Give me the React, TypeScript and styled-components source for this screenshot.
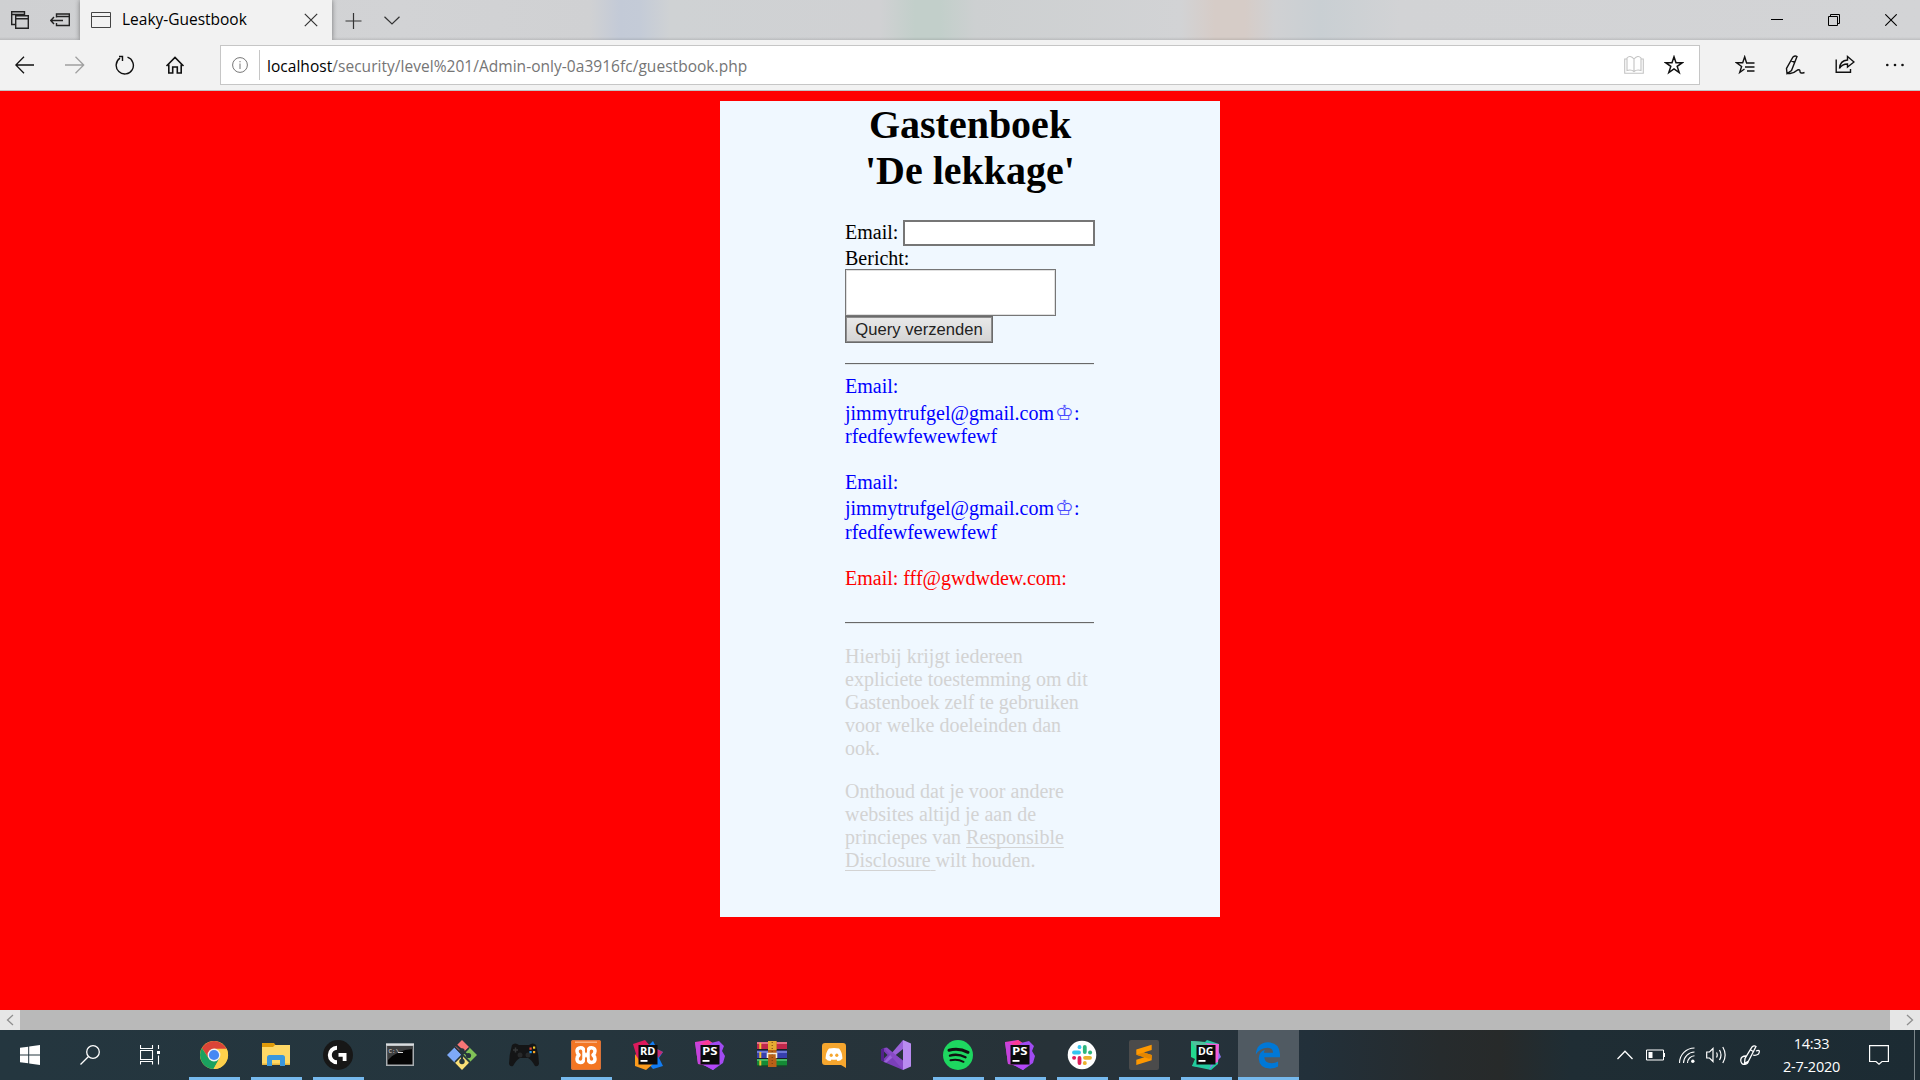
import React from "react";
import styled, { createGlobalStyle, css } from "styled-components";

const GlobalStyle = createGlobalStyle`
  html, body { margin: 0; padding: 0; overflow: hidden; }
  * { box-sizing: border-box; }
`;

const uiFont = `"Open Sans", "Noto Sans", sans-serif`;
const serif = `"Liberation Serif", "Times New Roman", serif`;

const Screen = styled.div`
  width: 1920px;
  height: 1080px;
  display: flex;
  flex-direction: column;
  overflow: hidden;
  background: #f00;
`;

const TitleBar = styled.header`
  flex: none;
  height: 40px;
  display: flex;
  background: linear-gradient(to bottom, transparent 37px, rgba(0, 0, 0, 0.1) 40px),
    linear-gradient(
      to right,
      #cfd0d2 0, #d2d3d5 400px, #d0d1d3 590px, #c3cad7 620px, #c4cbd7 640px, #cfd2d4 670px,
      #d0d1d3 880px, #c2cfca 915px, #c2cfca 940px, #cdd0d1 975px, #d2d3d5 1180px,
      #d6ccc7 1215px, #d6ccc7 1245px, #d0d1d3 1275px, #c9cfd3 1320px, #d2d3d5 1400px, #d3d4d6 1920px
    );
`;

const Cell = styled.span<{ $w: number }>`
  flex: none;
  width: ${(p) => p.$w}px;
  height: 100%;
  display: flex;
  align-items: center;
  justify-content: center;
`;

const CaptionButton = styled.span`
  flex: none;
  width: 57px;
  height: 100%;
  padding-right: 1px;
  display: flex;
  align-items: center;
  justify-content: center;
`;

const Tab = styled.div`
  flex: none;
  width: 252px;
  display: flex;
  align-items: center;
  background: #f2f2f2;
  box-shadow: 0 0 5px rgba(0, 0, 0, 0.45);
  clip-path: inset(0 -6px 0 -6px);
`;

const TabTitle = styled.span`
  flex: 1;
  padding-bottom: 2px;
  font: 15.5px/20px ${uiFont};
  letter-spacing: -0.01px;
  color: #000;
  white-space: nowrap;
`;

const Spacer = styled.div`
  flex: 1;
`;

const Toolbar = styled.nav`
  flex: none;
  height: 51px;
  display: flex;
  align-items: center;
  background: #f2f2f2;
  border-bottom: 1px solid #c2c2c2;
`;

const AddressBar = styled.div`
  width: 1480px;
  height: 40px;
  margin: 0 20px;
  padding-right: 5px;
  display: flex;
  align-items: center;
  background: #fff;
  border: 1px solid #c6c6c6;
`;

const Divider = styled.span`
  width: 1px;
  height: 30px;
  background: #c6c6c6;
`;

const Url = styled.span`
  flex: 1;
  padding: 2px 0 0 7px;
  font: 15.5px/22px ${uiFont};
  letter-spacing: 0.035px;
  color: #757575;
  white-space: nowrap;
`;

const Host = styled.span`
  color: #000;
`;

const Viewport = styled.main`
  flex: 1;
  min-height: 0;
  padding: 10px 0 0 720px;
  background: #f00;
`;

const Card = styled.div`
  width: 500px;
  height: 816px;
  padding: 1px 125px 0;
  background: #f0f8ff;
  font: 20px/23px ${serif};
`;

const Heading = styled.h1`
  margin: 0 0 26px;
  font: bold 40px/46px ${serif};
  text-align: center;
  color: #000;
`;

const Form = styled.form`
  display: flex;
  flex-direction: column;
  align-items: flex-start;
`;

const FieldLine = styled.label`
  width: 250px;
  height: 26px;
  display: flex;
  align-items: flex-start;
  justify-content: space-between;
  white-space: nowrap;
`;

const FieldText = styled.span`
  padding-top: 1px;
`;

const FieldLabel = styled.label`
  height: 23px;
  padding-top: 1px;
`;

const EmailInput = styled.input`
  width: 192px;
  height: 26px;
  padding: 0 4px;
  border: 2px solid #767676;
  outline: none;
  background: #fff;
  font: 16px "Liberation Sans", Arial, sans-serif;
`;

const MessageInput = styled.textarea`
  display: block;
  width: 211px;
  height: 47px;
  border: 1px solid #767676;
  box-shadow: inset 0 0 0 1px #e0e0e0;
  background: #fff;
  resize: none;
  outline: none;
`;

const SubmitButton = styled.button`
  width: 148px;
  height: 27px;
  padding: 0;
  border: 1px solid #6b6b6b;
  box-shadow: inset 0 0 0 1px #8d8d8d;
  background: linear-gradient(#e9e9e9, #d4d4d4);
  font: 16.6px/23px "Liberation Sans", Arial, sans-serif;
  color: #222;
  white-space: nowrap;
`;

const Rule = styled.hr<{ $top: number; $bottom: number }>`
  width: 249px;
  height: 2px;
  margin: ${(p) => p.$top}px 0 ${(p) => p.$bottom}px;
  border: 0;
  border-top: 1px solid #696969;
  border-bottom: 1px solid #dfe6ea;
`;

const Entry = styled.p<{ $color: string }>`
  margin: 0 0 23px;
  color: ${(p) => p.$color};
  white-space: nowrap;
`;

const Line = styled.span<{ $lead?: number; $trail?: number }>`
  display: flex;
  height: ${(p) => 23 + (p.$lead ?? 0) + (p.$trail ?? 0)}px;
  padding-top: ${(p) => p.$lead ?? 0}px;
`;

const Crown = styled.span`
  width: 20px;
  padding-left: 1px;
  font: 21px/22px "DejaVu Sans", sans-serif;
  color: #4a4cff;
`;

const Notice = styled.p`
  margin: 0 0 20px;
  color: #d3d3d3;
  white-space: nowrap;
`;

const NoticeLink = styled.a`
  color: #d3d3d3;
  text-decoration: underline;
  text-decoration-thickness: 1px;
  text-underline-offset: 3px;
  text-decoration-skip-ink: none;
`;

const ScrollBar = styled.div`
  flex: none;
  height: 20px;
  display: flex;
  background: #b9b9b9;
`;

const ScrollEnd = styled.span<{ $w: number; $right?: boolean }>`
  width: ${(p) => p.$w}px;
  display: flex;
  align-items: center;
  justify-content: ${(p) => (p.$right ? "flex-end" : "center")};
  padding-right: ${(p) => (p.$right ? 6 : 0)}px;
  background: #e6e6e6;
`;

const TaskBar = styled.footer`
  flex: none;
  height: 50px;
  display: flex;
  background: linear-gradient(to right, #24363f 0, #25353d 600px, #273238 1050px, #26323a 1200px, #22303a 1310px, #262b2d 1440px, #272a2a 1500px, #1f2d34 1570px, #1c2b33 1920px);
`;

const Apps = styled.div`
  display: flex;
  margin-left: 3px;
`;

const AppButton = styled.div<{ $running?: boolean; $active?: boolean }>`
  width: 62px;
  height: 50px;
  padding: 0 5px 0 6px;
  display: flex;
  flex-direction: column;
  ${(p) =>
    p.$active &&
    css`
      width: 61px;
      margin-left: 1px;
      padding: 0;
      background: #505a62;
    `}
  &::after {
    content: "";
    height: 3px;
    background: ${(p) => (p.$running ? "#76b9ed" : "transparent")};
  }
`;

const AppIcon = styled.span`
  height: 47px;
  padding: 10px 1px 0 0;
  display: flex;
  justify-content: center;
  align-items: flex-start;
`;

const Tray = styled.div`
  display: flex;
  align-items: center;
`;

const Clock = styled.div`
  width: 85px;
  height: 50px;
  padding-top: 2px;
  text-align: center;
  font: 14.5px/23px ${uiFont};
  letter-spacing: -0.25px;
  color: #fff;
  white-space: nowrap;
`;

const ShowDesktop = styled.span`
  width: 6px;
  height: 50px;
  border-left: 1px solid #7b868b;
`;

type GlyphProps = { w: number; h?: number; color?: string; sw?: number; children: React.ReactNode };
const Glyph = ({ w, h = w, color = "#111", sw = 1.3, children }: GlyphProps) => (
  <svg width={w} height={h} viewBox={`0 0 ${w} ${h}`} fill="none" stroke={color} strokeWidth={sw}>
    {children}
  </svg>
);

const Art = ({ children }: { children: React.ReactNode }) => (
  <svg width="30" height="30" viewBox="0 0 30 30">
    {children}
  </svg>
);

const JetBrains = ({ label, children }: { label: string; children: React.ReactNode }) => (
  <Art>
    {children}
    <rect x="5.5" y="5" width="19" height="19.500" fill="#0b0b0b" />
    <text x="7" y="15" fill="#fff" fontFamily="Open Sans, sans-serif" fontWeight="700" fontSize="11" textLength="15.5" lengthAdjust="spacingAndGlyphs">
      {label}
    </text>
    <rect x="7.500" y="20" width="7" height="1.800" fill="#fff" />
  </Art>
);

const PhpStorm = () => (
  <JetBrains label="PS">
    <path d="M0 2 13 0 19 4 12 26 3 24Z" fill="#e63bc4" />
    <path d="M13 0 19 4 9 9 2 6Z" fill="#fb3a92" />
    <path d="M16 3 24 1 29 6 27 11 30 16 28 23 18 30 7 24 4 14Z" fill="#a04bf2" />
    <path d="M7 24 28 20 18 30Z" fill="#b447f7" />
    <path d="M0 2 9 5 7 24 3 24Z" fill="#c444dc" />
  </JetBrains>
);

const Chrome = () => (
  <Art>
    <circle cx="15" cy="15" r="14" fill="#f7c83d" />
    <path d="M2.9 8A14 14 0 0 1 27.1 8L27.8 9.3H15L9.5 18Z" fill="#db4437" />
    <path d="M2.9 8A14 14 0 0 0 14.5 29L20.5 18.5 9.6 18.3Z" fill="#1ba15f" />
    <path d="M15 8.7H27.6A14 14 0 0 1 14.5 29L20.5 18.2Z" fill="#fdd04c" />
    <circle cx="15" cy="15" r="6.4" fill="#f1f1f1" />
    <circle cx="15" cy="15" r="5.1" fill="#4688f4" />
  </Art>
);

const Folder = () => (
  <Art>
    <path d="M1 3h12l1.500 2H29v4H1z" fill="#e09b09" />
    <path d="M1 7h11l2-2h15v20H1z" fill="#fed866" />
    <path d="M1 23.500h28V25H1z" fill="#e8b53d" />
    <path d="M6 26V17.500q0-2.500 2.500-2.500h13q2.500 0 2.500 2.500V26h-5v-6h-8v6z" fill="#3b97dc" />
  </Art>
);

const LogitechG = () => (
  <Art>
    <circle cx="15" cy="15" r="15" fill="#171717" />
    <path d="M14 7.800A7.200 7.200 0 0 0 14 22.200" fill="none" stroke="#fff" strokeWidth="4" />
    <path d="M15.500 13h8v8h-3.800v-4.300h-4.200z" fill="#fff" />
  </Art>
);

const Terminal = () => (
  <Art>
    <rect x="1" y="3.500" width="28" height="22.500" fill="#a8adb0" />
    <rect x="1" y="3.500" width="28" height="2" fill="#d8dcde" />
    <rect x="2.500" y="6" width="25" height="18.500" fill="#050505" />
    <path d="M2.500 6h25v3Q12 10 3 20z" fill="#3c3e3f" />
    <text x="3.500" y="12.500" fill="#ddd" fontFamily="Liberation Mono, monospace" fontSize="6">C:\</text>
    <path d="M13 12.500h5" stroke="#ddd" />
  </Art>
);

const Git = () => (
  <Art>
    <path d="M15 0 22 7 15 14 8 7Z" fill="#f87576" />
    <path d="M7.500 7.500 14.500 15 7.500 22.500 0 15Z" fill="#7eaaf8" />
    <path d="M22.500 7.500 30 15 22.500 22.500 15 15Z" fill="#80c257" />
    <path d="M15 15.500 22 22.800 15 30 8 22.800Z" fill="#fbdf76" />
    <path d="M8 7 23 22M22 8 8 22" stroke="#26353c" strokeWidth="1.500" />
    <path d="M9 5 15 10.500V21M15 10.500 21 15.500" stroke="#26353c" strokeWidth="2.200" fill="none" />
    <circle cx="15" cy="11" r="2.700" fill="#26353c" />
    <circle cx="21.500" cy="15.500" r="2.600" fill="#26353c" />
    <circle cx="15" cy="21.500" r="2.700" fill="#26353c" />
  </Art>
);

const Gamepad = () => (
  <Art>
    <path d="M3 5q3-3 7 0h10q4-3 7 0 3 10 3 19-1 3-4 2-4-7-7-8h-8q-3 1-7 8-3 1-4-2 0-9 3-19z" fill="#141516" />
    <path d="M4 10h5M6.500 7.500v5" stroke="#353839" strokeWidth="1.500" />
    <circle cx="11" cy="15" r="2.500" fill="#27292a" />
    <circle cx="19" cy="15" r="2.500" fill="#27292a" />
    <rect x="24" y="6.500" width="2.200" height="2.200" fill="#f2cd2c" />
    <rect x="20.500" y="7.500" width="2.200" height="2.200" fill="#ee4b34" />
    <rect x="20.500" y="11" width="2.200" height="2.200" fill="#299bec" />
    <rect x="24" y="11" width="2.200" height="2.200" fill="#f6a421" />
  </Art>
);

const Xampp = () => (
  <Art>
    <rect width="30" height="30" rx="2" fill="#f37623" />
    <rect x="0.500" y="0.500" width="29" height="29" rx="2" fill="none" stroke="#d9733a" />
    <rect x="4" y="1.500" width="22" height="1.500" fill="#f9ad7c" />
    <path
      d="M12.300 15H17.700M13 11Q12.500 7.500 9.500 7.700 6 8 6 11 6 13.500 8 15 6 16.500 6 19 6 22.300 9.500 22.500 12.500 22.500 13 19M17 11Q17.500 7.500 20.500 7.700 24 8 24 11 24 13.500 22 15 24 16.500 24 19 24 22.300 20.500 22.500 17.500 22.500 17 19M13 11V19M17 11V19"
      fill="none"
      stroke="#fff"
      strokeWidth="3.500"
      strokeLinejoin="round"
    />
    <path d="M15 6v6.500M15 17.500V24" stroke="#f37623" strokeWidth="2" />
  </Art>
);

const Rider = () => (
  <JetBrains label="RD">
    <path d="M0 4 12 0 18 7 10 27 2 25 3 14Z" fill="#dc1a5c" />
    <path d="M14 7 20 1 24 9 30 12 26 18 30 26 20 29 12 20Z" fill="#127cf2" />
    <path d="M2 14 8 23 20 24 13 30 2 26Z" fill="#fb9b1c" />
    <path d="M22 8 30 12 25 18Z" fill="#c32a72" />
  </JetBrains>
);

const WinRar = () => (
  <Art>
    <rect x="0" y="2" width="30" height="8" fill="#c1274b" />
    <rect x="0" y="2" width="30" height="2" fill="#e46f86" />
    <rect x="0" y="10.500" width="30" height="8" fill="#373fae" />
    <rect x="0" y="11" width="30" height="2" fill="#6e79d8" />
    <rect x="0" y="19" width="30" height="7.500" fill="#148a35" />
    <rect x="0" y="19" width="30" height="2" fill="#46b765" />
    <path d="M0 9.500h30M0 18.500h30M0 26h30" stroke="#182225" />
    <path d="M3.300 3v6M3.300 12v6M3.300 20.500v5" stroke="#f0bf31" strokeWidth="2" />
    <rect x="11" y="1" width="8.500" height="26" fill="#b96018" />
    <rect x="11" y="1" width="8.500" height="9" fill="#e5aa32" />
    <path d="M15.200 2v23" stroke="#703a14" strokeDasharray="1 2" />
    <path d="M10.500 18v-4.500h9V18" fill="none" stroke="#f6efda" strokeWidth="1.600" />
  </Art>
);

const Discord = () => (
  <Art>
    <path d="M6 3h18q3 0 3 3v22l-5-3H6q-3 0-3-3V6q0-3 3-3z" fill="#f6a62e" />
    <path d="M10 8.500q5-1 10 0 3 3 3.500 10-2 2.500-5 2.500l-1-1.600q-2.500.6-5 0L11.500 21q-3 0-5-2.500Q7 11.500 10 8.500z" fill="#fff" />
    <ellipse cx="12.200" cy="15.200" rx="1.600" ry="1.800" fill="#f6a62e" />
    <ellipse cx="17.800" cy="15.200" rx="1.600" ry="1.800" fill="#f6a62e" />
  </Art>
);

const VisualStudio = () => (
  <Art>
    <path d="M0 9.500 3 8 26 22.500 22 30 3 22 0 20Z" fill="#7b3fb9" />
    <path d="M0 9.500 3 8V22L0 20Z" fill="#52218a" />
    <path d="M22 9.500V20.500L15.500 15Z" fill="#26333a" />
    <path d="M3 22 22 0V9L5.500 22.500Z" fill="#9a62d8" />
    <path d="M3 8 6 7.500 22 21V30Z" fill="#8849c6" />
    <path d="M22 0 30 3.500V26.500L22 30Z" fill="#b98bf0" />
    <path d="M3 11.500V18.500L6.500 15Z" fill="#26333a" />
  </Art>
);

const Spotify = () => (
  <Art>
    <circle cx="15" cy="15" r="15" fill="#1ed760" />
    <path d="M6 10.300q10-2.600 19 2" fill="none" stroke="#111" strokeWidth="3" strokeLinecap="round" />
    <path d="M7 15.600q8-2.200 15.500 1.700" fill="none" stroke="#111" strokeWidth="2.400" strokeLinecap="round" />
    <path d="M7.500 20.300q7-1.600 13 1.500" fill="none" stroke="#111" strokeWidth="2" strokeLinecap="round" />
  </Art>
);

const Slack = () => (
  <Art>
    <circle cx="15" cy="15" r="14.300" fill="#fff" />
    <g strokeWidth="3.800" strokeLinecap="round">
      <path d="M7 12.500h5" stroke="#36c5f0" />
      <path d="M12.500 7v.2" stroke="#36c5f0" />
      <path d="M17.800 7v5" stroke="#2eb67d" />
      <path d="M23 12.500h.2" stroke="#2eb67d" />
      <path d="M18 17.800h5" stroke="#ecb22e" />
      <path d="M17.800 23v.2" stroke="#ecb22e" />
      <path d="M12.500 18v5" stroke="#e01e5a" />
      <path d="M7 17.800h.2" stroke="#e01e5a" />
    </g>
  </Art>
);

const Sublime = () => (
  <Art>
    <rect width="30" height="30" rx="2" fill="#4b4b4b" />
    <path d="M7.300 9.500 22.700 4.800V10l-8 2.600 8 2.400v5.300L7.300 25v-5.200l8-2.500-8-2.500z" fill="#ff9800" />
    <path d="M7.300 14.800 14.700 12.600 22.700 15v3L20 18.800Z" fill="#e58600" />
  </Art>
);

const DataGrip = () => (
  <JetBrains label="DG">
    <path d="M0 1 15 2 25 6 8 27 1 26 4 19 0 17Z" fill="#22d88f" />
    <path d="M13 3 16 0 28 4 27 24 20 30 1 26 5 20Z" fill="#22c9a0" />
    <path d="M26 8 30 17 22 25 18 30Z" fill="#8b76ec" />
    <path d="M11 3 28 4 27 22 22 24 21 8Z" fill="#f65ad9" />
    <path d="M0 1 12 2 22 8 5 9Z" fill="#4fc09d" />
  </JetBrains>
);

const Edge = () => (
  <Art>
    <path d="M2.800 14.500Q3.500 3 15 2.300 26.500 2.500 27 14v3.200H11.300q.4 5.800 7.300 6 3.600 0 6.500-1.800v5.200q-3.600 2-8.300 1.900Q6.300 28 5.700 18.500 5.900 11.700 12 9.700q-1 1.200-1 3h9q0-4.900-5.300-5Q7 7.900 2.800 14.500z" fill="#0078d7" />
  </Art>
);

const apps: { id: string; icon: React.FC; running?: boolean; active?: boolean }[] = [
  { id: "chrome", icon: Chrome, running: true },
  { id: "explorer", icon: Folder, running: true },
  { id: "ghub", icon: LogitechG, running: true },
  { id: "cmd", icon: Terminal },
  { id: "git", icon: Git },
  { id: "gamepad", icon: Gamepad },
  { id: "xampp", icon: Xampp, running: true },
  { id: "rider", icon: Rider },
  { id: "phpstorm", icon: PhpStorm },
  { id: "winrar", icon: WinRar },
  { id: "discord", icon: Discord },
  { id: "vs", icon: VisualStudio },
  { id: "spotify", icon: Spotify, running: true },
  { id: "phpstorm-project", icon: PhpStorm, running: true },
  { id: "slack", icon: Slack, running: true },
  { id: "sublime", icon: Sublime, running: true },
  { id: "datagrip", icon: DataGrip, running: true },
  { id: "edge", icon: Edge, running: true, active: true },
];

const STAR = "M10 1.800 12 7.700H18.300L13.200 11.400 15.200 17.500 10 13.800 4.800 17.500 6.800 11.400 1.700 7.700H8Z";

const BrowserTabs = () => (
  <TitleBar>
    <Cell $w={40}>
      <Glyph w={20} color="#222" sw={1.4}>
        <path d="M5.500 14.500H1.700V1.700H14.500V5M1.700 4.500h12.800" />
        <path d="M5.700 5.700H18.300V18.300H5.700ZM5.700 8.700H18.300" />
      </Glyph>
    </Cell>
    <Cell $w={40}>
      <Glyph w={20} color="#222" sw={1.4}>
        <path d="M6.500 7.500V4H19.300V15.500H6.500V13M6.500 6.500H19M.8 10.500H13M4 7 .8 10.500 4 14" />
      </Glyph>
    </Cell>
    <Tab>
      <Cell $w={42}>
        <Glyph w={20} h={16} color="#444" sw={1}>
          <path d="M.5.5h19v15H.5zM.5 4.500h19" />
        </Glyph>
      </Cell>
      <TabTitle>Leaky-Guestbook</TabTitle>
      <Cell $w={42}>
        <Glyph w={14} color="#333" sw={1.2}>
          <path d="M.8.800 13.200 13.200M13.200.800.8 13.200" />
        </Glyph>
      </Cell>
    </Tab>
    <Cell $w={42}>
      <Glyph w={17} color="#333" sw={1.2}>
        <path d="M8.500 1v16M.5 9h16" />
      </Glyph>
    </Cell>
    <Cell $w={36}>
      <Glyph w={16} h={9} color="#333" sw={1.2}>
        <path d="M.5.700 8 8 15.500.700" />
      </Glyph>
    </Cell>
    <Spacer />
    <CaptionButton>
      <Glyph w={12} color="#000" sw={1}>
        <path d="M0 5.500h12" />
      </Glyph>
    </CaptionButton>
    <CaptionButton>
      <Glyph w={12} color="#000" sw={1}>
        <path d="M.5 2.500h9v9h-9zM2.500 2.500v-2h9v9h-2" />
      </Glyph>
    </CaptionButton>
    <CaptionButton>
      <Glyph w={12} color="#000" sw={1.1}>
        <path d="M.3.300 11.700 11.700M11.700.300.3 11.700" />
      </Glyph>
    </CaptionButton>
  </TitleBar>
);

const Navigation = () => (
  <Toolbar>
    <Cell $w={50}>
      <Glyph w={20} h={18}>
        <path d="M.8 9H19M9 .8.8 9 9 17.200" />
      </Glyph>
    </Cell>
    <Cell $w={50}>
      <Glyph w={20} h={18} color="#a0a0a0">
        <path d="M0 9H18.500M10.500.8 18.700 9 10.500 17.200" />
      </Glyph>
    </Cell>
    <Cell $w={50}>
      <Glyph w={20} sw={1.4}>
        <path d="M5 3.200A8.600 8.600 0 1 0 12.500 2.200M4 1.500H7.500V6" />
      </Glyph>
    </Cell>
    <Cell $w={50}>
      <Glyph w={20} sw={1.6}>
        <path d="M1.500 11 10 2.500 18.500 11M3.800 9.500V18H7.700V12H12.300V18H16.200V9.500" />
      </Glyph>
    </Cell>
    <AddressBar>
      <Cell $w={38}>
        <Glyph w={16} color="#777" sw={1}>
          <circle cx="8" cy="8" r="7.400" />
          <path d="M8 6.500V12M8 4v1.300" />
        </Glyph>
      </Cell>
      <Divider />
      <Url>
        <Host>localhost</Host>/security/level%201/Admin-only-0a3916fc/guestbook.php
      </Url>
      <Cell $w={40}>
        <Glyph w={20} color="#c4c4c4" sw={1.1}>
          <path d="M10 4Q6-.5 3 3v12.500q4-1.500 7 1 3-2.500 7-1V3Q14-.5 10 4ZM10 4v12.500M3 4H.7v14.300H19.300V4H17" />
        </Glyph>
      </Cell>
      <Cell $w={40}>
        <Glyph w={20} sw={1.5}>
          <path d={STAR} />
        </Glyph>
      </Cell>
    </AddressBar>
    <Cell $w={50}>
      <Glyph w={20} sw={1.4}>
        <path d="M11.500 7.700 9.700 1.800 7.700 7.700H1.500L6.600 11.400 4.700 17.500 9.500 14M11 8H19.500M10 12H19.500M12 16H19.500" />
      </Glyph>
    </Cell>
    <Cell $w={50}>
      <Glyph w={20} sw={1.4}>
        <path d="M8 2Q10 .3 12 1.500L6.500 15.500 2 18.500 1.500 13.500ZM6 5.500 10 7.500M1.500 18.500H5Q10 17.500 12.500 15q2.500-1 2.500 1.500t4.500 1" />
      </Glyph>
    </Cell>
    <Cell $w={50}>
      <Glyph w={20} sw={1.4}>
        <path d="M1.200 4.500V17.300H15.500V14M4.500 13.500Q5 5.500 12.500 5V1.500L19 7 12.500 12V9Q7 9 4.500 13.500Z" />
      </Glyph>
    </Cell>
    <Cell $w={50}>
      <Glyph w={20} color="none">
        <g fill="#111">
          <circle cx="2.300" cy="10" r="1.300" />
          <circle cx="10" cy="10" r="1.300" />
          <circle cx="17.500" cy="10" r="1.300" />
        </g>
      </Glyph>
    </Cell>
  </Toolbar>
);

const AdminEntry = ({ lead, trail }: { lead: number; trail: number }) => (
  <Entry $color="#0000ff">
    <Line>Email:</Line>
    <Line $lead={lead} $trail={trail}>
      jimmytrufgel@gmail.com<Crown>♔</Crown>:
    </Line>
    <Line>rfedfewfewewfewf</Line>
  </Entry>
);

const Guestbook = () => (
  <Viewport>
    <Card>
      <Heading>
        Gastenboek
        <br />
        'De lekkage'
      </Heading>
      <Form onSubmit={(e) => e.preventDefault()}>
        <FieldLine>
          <FieldText>Email:</FieldText>
          <EmailInput type="text" />
        </FieldLine>
        <FieldLabel htmlFor="bericht">Bericht:</FieldLabel>
        <MessageInput id="bericht" />
        <SubmitButton type="submit">Query verzenden</SubmitButton>
      </Form>
      <Rule $top={20} $bottom={10} />
      <AdminEntry lead={4} trail={0} />
      <AdminEntry lead={3} trail={1} />
      <Entry $color="#ff0000">Email: fff@gwdwdew.com:</Entry>
      <Rule $top={32} $bottom={21} />
      <Notice>
        Hierbij krijgt iedereen
        <br />
        expliciete toestemming om dit
        <br />
        Gastenboek zelf te gebruiken
        <br />
        voor welke doeleinden dan
        <br />
        ook.
      </Notice>
      <Notice>
        Onthoud dat je voor andere
        <br />
        websites altijd je aan de
        <br />
        princiepes van{" "}
        <NoticeLink>
          Responsible
          <br />
          Disclosure{" "}
        </NoticeLink>
        wilt houden.
      </Notice>
    </Card>
  </Viewport>
);

const WindowsTaskBar = () => (
  <TaskBar>
    <Cell $w={60}>
      <Glyph w={20} color="none">
        <path fill="#fff" d="M0 2.800 8.200 1.700V9.500H0ZM9.200 1.500 20 0V9.500H9.200ZM0 10.500H8.200V18.300L0 17.200ZM9.200 10.500H20V20L9.200 18.500Z" />
      </Glyph>
    </Cell>
    <Cell $w={60}>
      <Glyph w={20} color="#fff">
        <circle cx="13" cy="7" r="6.300" />
        <path d="M8.500 11.500.5 19.500" />
      </Glyph>
    </Cell>
    <Cell $w={60}>
      <Glyph w={20} color="#fff" sw={1.1}>
        <path d="M.5 0v3.500h12V0M.5 5.500h12v9H.5zM.5 19.500v-3h12v3M18.500 0v4M18.500 10.500v9" />
        <path d="M17 6h3v3h-3z" fill="#fff" stroke="none" />
      </Glyph>
    </Cell>
    <Apps>
      {apps.map(({ id, icon: Icon, running, active }) => (
        <AppButton key={id} $running={running} $active={active}>
          <AppIcon>
            <Icon />
          </AppIcon>
        </AppButton>
      ))}
    </Apps>
    <Spacer />
    <Tray>
      <Cell $w={30}>
        <Glyph w={16} h={10} color="#fff">
          <path d="M.5 9 8 1.200 15.500 9" />
        </Glyph>
      </Cell>
      <Cell $w={32}>
        <Glyph w={20} h={12} color="#fff" sw={1}>
          <path d="M.5 1h17v10H.5zM18.500 4v4" />
          <path d="M2.500 3h4v6h-4z" fill="#fff" stroke="none" />
        </Glyph>
      </Cell>
      <Cell $w={29}>
        <Glyph w={18} color="#fff" sw={1.1}>
          <path d="M1.500 17A15 15 0 0 1 16.500 2M5.500 17A11.200 11.200 0 0 1 16.500 6M9.500 17A7.300 7.300 0 0 1 16.500 9.800" />
          <circle cx="14.800" cy="15.200" r="1.700" fill="#fff" stroke="none" />
        </Glyph>
      </Cell>
      <Cell $w={29}>
        <Glyph w={20} h={18} color="#fff" sw={1.2}>
          <path d="M.7 6H3.500L7 2.500V15.500L3.500 12H.7ZM10.500 6.500Q12 9 10.500 11.500M13.500 4Q16.500 9 13.500 14M16.800 1Q21.500 9 16.800 17" />
        </Glyph>
      </Cell>
      <Cell $w={39}>
        <Glyph w={20} color="#fff" sw={1.3}>
          <path d="M12 2Q14 0 16 1.500L8.500 16 4.500 18.500 5 13.500ZM10 4.500 14 7M16 6q5-2 2.500 3-3 2-5.500 1M6 11q-5 0-5.300 4 .3 5 4.300 4.300Q8 19 8.500 16" />
        </Glyph>
      </Cell>
      <Clock>
        14:33
        <br />
        2-7-2020
      </Clock>
      <Cell $w={50}>
        <Glyph w={20} color="#fff" sw={1.2}>
          <path d="M.6.600H19.400V16.500H13L10 19.200 7 16.500H.6Z" />
        </Glyph>
      </Cell>
      <Cell $w={10} />
      <ShowDesktop />
    </Tray>
  </TaskBar>
);

export default function App() {
  return (
    <Screen>
      <GlobalStyle />
      <BrowserTabs />
      <Navigation />
      <Guestbook />
      <ScrollBar>
        <ScrollEnd $w={20}>
          <Glyph w={8} h={12} color="#8f8f8f">
            <path d="M7 1 1.500 6 7 11" />
          </Glyph>
        </ScrollEnd>
        <Spacer />
        <ScrollEnd $w={30} $right>
          <Glyph w={8} h={12} color="#8f8f8f">
            <path d="M1 1 6.500 6 1 11" />
          </Glyph>
        </ScrollEnd>
      </ScrollBar>
      <WindowsTaskBar />
    </Screen>
  );
}
